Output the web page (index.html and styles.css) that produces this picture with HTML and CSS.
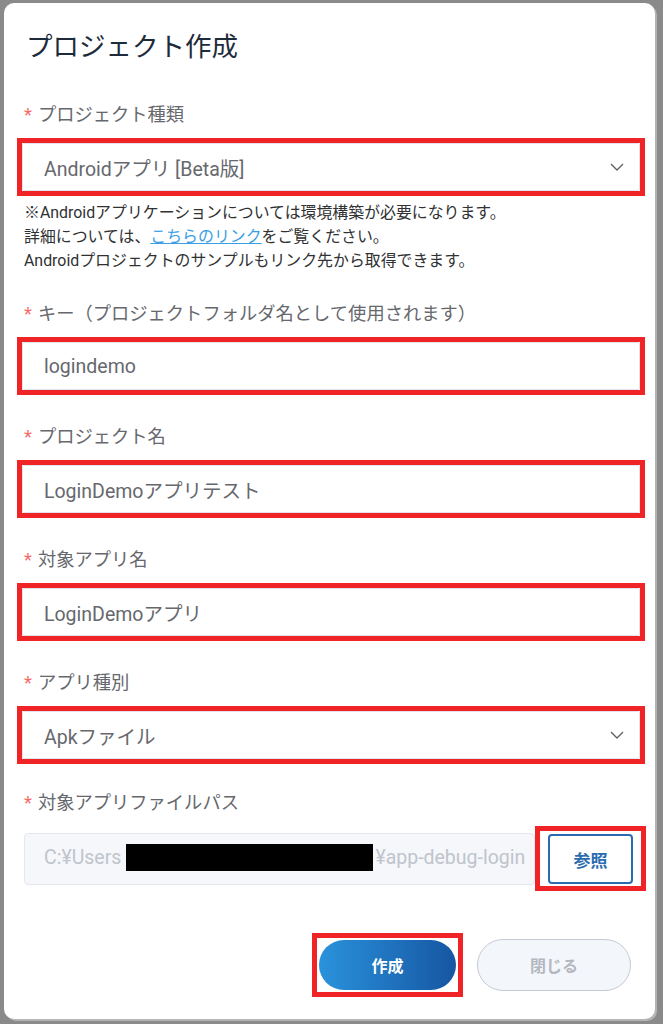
FILE: index.html
```html
<!DOCTYPE html>
<html lang="ja">
<head>
<meta charset="utf-8">
<title>プロジェクト作成</title>
<link rel="stylesheet" href="styles.css">
</head>
<body>
<div class="dialog">
  <h1 class="title">プロジェクト作成</h1>
  <div class="form">
    <div class="item item-first">
      <div class="label"><span class="req">*</span>プロジェクト種類</div>
      <div class="mark">
        <div class="field select">
          <span class="value">Androidアプリ [Beta版]</span>
          <svg class="chev" width="14" height="8" viewBox="0 0 14 8"><polyline points="1,1 7,7 13,1" fill="none" stroke="#606266" stroke-width="1.4"/></svg>
        </div>
      </div>
      <div class="help">
        <div>※Androidアプリケーションについては環境構築が必要になります。</div>
        <div>詳細については、<span class="link">こちらのリンク</span>をご覧ください。</div>
        <div>Androidプロジェクトのサンプルもリンク先から取得できます。</div>
      </div>
    </div>
    <div class="item">
      <div class="label"><span class="req">*</span>キー（プロジェクトフォルダ名として使用されます）</div>
      <div class="mark"><div class="field"><span class="value">logindemo</span></div></div>
    </div>
    <div class="item">
      <div class="label"><span class="req">*</span>プロジェクト名</div>
      <div class="mark"><div class="field"><span class="value">LoginDemoアプリテスト</span></div></div>
    </div>
    <div class="item">
      <div class="label"><span class="req">*</span>対象アプリ名</div>
      <div class="mark"><div class="field"><span class="value">LoginDemoアプリ</span></div></div>
    </div>
    <div class="item item-select">
      <div class="label"><span class="req">*</span>アプリ種別</div>
      <div class="mark">
        <div class="field select">
          <span class="value">Apkファイル</span>
          <svg class="chev" width="14" height="8" viewBox="0 0 14 8"><polyline points="1,1 7,7 13,1" fill="none" stroke="#606266" stroke-width="1.4"/></svg>
        </div>
      </div>
    </div>
    <div class="item item-file">
      <div class="label"><span class="req">*</span>対象アプリファイルパス</div>
      <div class="file-row">
        <div class="file-input"><span class="fv">C:¥Users<span class="redact"></span>¥app-debug-login</span></div>
        <div class="mark-btn"><button class="browse">参照</button></div>
      </div>
    </div>
  </div>
  <div class="footer">
    <div class="mark-create"><button class="btn-create">作成</button></div>
    <button class="btn-close">閉じる</button>
  </div>
</div>
</body>
</html>
```

FILE: styles.css
```css
html, body {
  margin: 0;
  padding: 0;
}
body {
  background: #8a8a8a;
  width: 663px;
  height: 1024px;
  overflow: hidden;
  font-family: Roboto, "Noto Sans CJK JP", sans-serif;
}
.dialog {
  box-sizing: border-box;
  margin: 3px 0 0 4px;
  width: 651px;
  height: 1016px;
  background: #fff;
  border-radius: 10px;
  box-shadow: 2px 2px 0 #b4b4b4;
  padding: 27px 17px 0 20px;
}
.title {
  margin: 0 0 0 2px;
  font-size: 26.5px;
  line-height: 34px;
  font-weight: 400;
  color: #1e2b3b;
}
.form {
  margin-top: 39px;
}
.item {
  margin-bottom: 30px;
}
.item-first {
  margin-bottom: 29px;
}
.item-select {
  margin-bottom: 27px;
}
.label {
  font-size: 18.3px;
  line-height: 24px;
  color: #66686d;
  margin-bottom: 11px;
}
.req {
  color: #f56c6c;
  margin-right: 6px;
}
.mark {
  margin: 0 -7px;
  border: 5px solid #f02326;
}
.field {
  box-sizing: border-box;
  height: 48px;
  border: 1px solid #e1e4ea;
  border-radius: 2px;
  background: #fff;
  display: flex;
  align-items: center;
  padding: 0 15px 0 21px;
}
.value {
  font-size: 19.5px;
  color: #66686d;
  flex: 1;
  white-space: nowrap;
}
.chev {
  flex: none;
}
.help {
  margin-top: 5px;
  font-size: 15.9px;
  line-height: 24px;
  color: #303133;
}
.link {
  color: #3a9ee4;
  text-decoration: underline;
}
.file-row {
  display: flex;
  align-items: center;
  margin-right: -9px;
}
.file-input {
  box-sizing: border-box;
  width: 511px;
  height: 52px;
  background: #f5f7fa;
  border: 1px solid #e4e7ed;
  border-radius: 4px;
  display: flex;
  align-items: center;
  padding: 0 8px 0 19px;
  overflow: hidden;
  flex: none;
}
.fv {
  font-size: 19.5px;
  color: #c0c4cc;
  white-space: nowrap;
}
.redact {
  display: inline-block;
  width: 247px;
  height: 27px;
  background: #000;
  vertical-align: middle;
  margin: -4px 2px 0 5px;
}
.mark-btn {
  flex: none;
  border: 5px solid #f02326;
  padding: 3px 8px 2px 8px;
}
.browse {
  display: block;
  box-sizing: border-box;
  width: 85px;
  height: 50px;
  border: 2px solid #2b6cb0;
  border-radius: 4px;
  background: #fff;
  color: #2b6cb0;
  font-family: Roboto, "Noto Sans CJK JP", sans-serif;
  font-size: 17px;
  font-weight: 700;
  padding: 0;
}
.footer {
  margin-top: 42px;
  display: flex;
  justify-content: flex-end;
  align-items: center;
  gap: 14px;
  padding-right: 7px;
}
.mark-create {
  border: 5px solid #f02326;
  padding: 2px;
}
.btn-create {
  display: block;
  width: 137px;
  height: 50px;
  border: none;
  border-radius: 25px;
  background: linear-gradient(90deg, #2a92dc, #1656a2);
  color: #fff;
  font-family: Roboto, "Noto Sans CJK JP", sans-serif;
  font-size: 16px;
  font-weight: 700;
  padding: 0;
}
.btn-close {
  box-sizing: border-box;
  width: 154px;
  height: 52px;
  border: 1.5px solid #c6cad3;
  border-radius: 26px;
  background: #f3f6fb;
  color: #b3b7bf;
  font-family: Roboto, "Noto Sans CJK JP", sans-serif;
  font-size: 16px;
  font-weight: 700;
  padding: 0;
}
```
